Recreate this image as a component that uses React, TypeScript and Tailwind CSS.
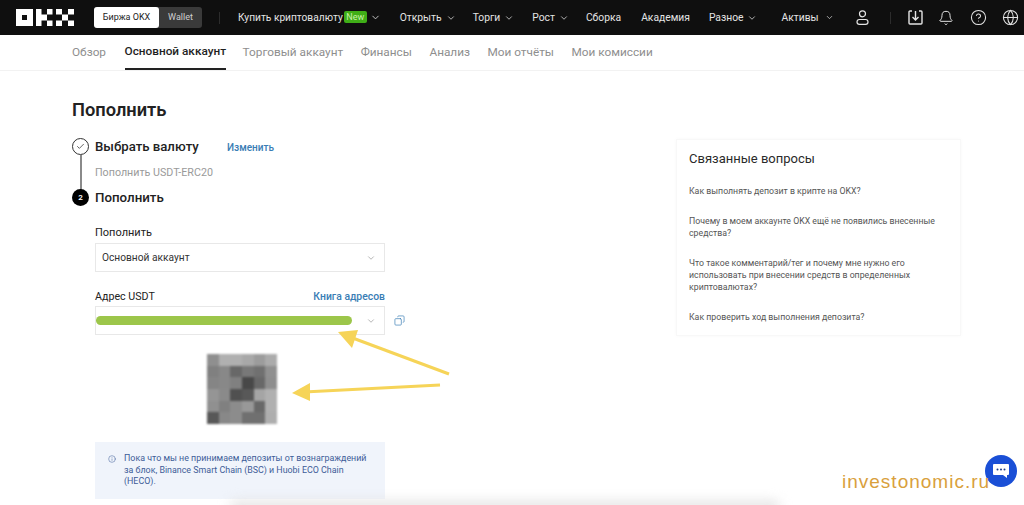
import { ChevronDown, Check, Copy, Info, Bell, CircleHelp, Globe } from "lucide-react";

const font = { fontFamily: "Roboto" };

const qrCells = [
  "#8f8f8f", "#b0b0b0", "#b0b0b0", "#a8a8a8", "#9c9c9c", "#ababab",
  "#808080", "#888888", "#686868", "#787878", "#707070", "#909090",
  "#858585", "#888888", "#808080", "#484848", "#686868", "#8e8e8e",
  "#959595", "#8a8a8a", "#505050", "#585858", "#a5a5a5", "#b0b0b0",
  "#909090", "#808080", "#8c8c8c", "#989898", "#686868", "#b0b0b0",
  "#585858", "#888888", "#8c8c8c", "#707070", "#707070", "#aeaeae",
];

function Logo() {
  return (
    <svg width="58" height="17" viewBox="0 0 58 17" fill="#fff" className="ml-4 shrink-0">
      <path d="M0 0h17v17H0z M6 6v5h5V6z" fillRule="evenodd" />
      <path d="M20 0h5.500v5.500H20z M20 5.500h5.500v6H20z M20 11.500h5.500V17H20z M25.500 5.500h5.500v6h-5.500z M31 0h5.500v5.500H31z M31 11.500h5.500V17H31z" />
      <path d="M40 0h6v5.500h-6z M52 0h6v5.500h-6z M46 5.500h6v6h-6z M40 11.500h6V17h-6z M52 11.500h6V17h-6z" />
    </svg>
  );
}

function UserIcon() {
  return (
    <svg width="13" height="15" viewBox="0 0 13 15" fill="none" stroke="#e4e4e4" strokeWidth="1.200" className="ml-[22px] shrink-0">
      <circle cx="6.500" cy="3.800" r="3" />
      <rect x="1" y="9.500" width="11" height="4.800" rx="2.400" />
    </svg>
  );
}

function DownloadIcon() {
  return (
    <svg width="15" height="15" viewBox="0 0 15 15" fill="none" stroke="#e4e4e4" strokeWidth="1.400" className="ml-[17px] shrink-0">
      <path d="M4 1H2a1 1 0 0 0-1 1v11a1 1 0 0 0 1 1h11a1 1 0 0 0 1-1V2a1 1 0 0 0-1-1h-2" />
      <path d="M7.500 1v8M4.500 7l3 3 3-3" />
    </svg>
  );
}

function NavItem({ label, chevron = true, className = "" }: { label: string; chevron?: boolean; className?: string }) {
  return (
    <div className={`flex shrink-0 items-center whitespace-nowrap text-[10.300px] text-[#e4e4e4] ${className}`}>
      {label}
      {chevron && <ChevronDown size={10} strokeWidth={2} className="ml-[4px] text-[#cfcfcf]" />}
    </div>
  );
}

function Header() {
  return (
    <header className="flex h-[35px] items-center bg-[#0f0f0f]">
      <Logo />
      <div className="ml-[20px] flex h-[21px] w-[108px] shrink-0 rounded-[3px] bg-[#3a3a3a] text-[9px]">
        <div className="flex w-[65px] items-center justify-center whitespace-nowrap rounded-[3px] bg-white text-[#222]">Биржа OKX</div>
        <div className="flex flex-1 items-center justify-center text-[#d0d0d0]">Wallet</div>
      </div>
      <div className="ml-[17px] h-[12px] w-px shrink-0 bg-[#2c2c2c]" />
      <div className="ml-[18px] flex shrink-0 items-center whitespace-nowrap text-[10.200px] text-[#e4e4e4]">
        Купить криптовалюту
        <span className="ml-[1px] flex h-[12px] w-[23px] items-center justify-center rounded-[2px] bg-[#3fae17] text-[9px] text-[#c9f0a8]">New</span>
        <ChevronDown size={11} strokeWidth={2} className="ml-[3px] text-[#cfcfcf]" />
      </div>
      <NavItem label="Открыть" className="ml-[19px]" />
      <NavItem label="Торги" className="ml-[17px]" />
      <NavItem label="Рост" className="ml-[18px]" />
      <NavItem label="Сборка" chevron={false} className="ml-[17px]" />
      <NavItem label="Академия" chevron={false} className="ml-[20px]" />
      <NavItem label="Разное" className="ml-[19px]" />
      <NavItem label="Активы" chevron={false} className="ml-[24px]" />
      <ChevronDown size={9} strokeWidth={2} className="ml-[6px] shrink-0 text-[#cfcfcf]" />
      <UserIcon />
      <div className="ml-[21px] h-[12px] w-px shrink-0 bg-[#2c2c2c]" />
      <DownloadIcon />
      <Bell size={16} strokeWidth={1.500} className="ml-[15px] shrink-0 text-[#e4e4e4]" />
      <CircleHelp size={17} strokeWidth={1.500} className="ml-[16px] shrink-0 text-[#e4e4e4]" />
      <Globe size={17} strokeWidth={1.500} className="ml-[15px] shrink-0 text-[#e4e4e4]" />
    </header>
  );
}

function SubNav() {
  const tabs = ["Торговый аккаунт", "Финансы", "Анализ", "Мои отчёты", "Мои комиссии"];
  return (
    <nav className="flex h-[36px] items-stretch gap-[17.500px] border-b border-[#f2f2f2] pl-[72px] text-[11.800px] text-[#8e8e8e]">
      <div className="flex items-center">Обзор</div>
      <div className="-mr-[1px] ml-[1px] flex items-center border-b-2 border-[#222] font-medium text-[#1f1f1f]">Основной аккаунт</div>
      {tabs.map((t) => (
        <div key={t} className="flex items-center">{t}</div>
      ))}
    </nav>
  );
}

function Field({ children }: { children: React.ReactNode }) {
  return (
    <div className="flex h-[29px] w-[290px] items-center justify-between border border-[#e8e8e8] pr-[8px]">
      {children}
      <ChevronDown size={10} strokeWidth={1.500} className="text-[#8a8a8a]" />
    </div>
  );
}

function LeftColumn() {
  return (
    <section className="w-[604px] shrink-0">
      <h1 className="pt-[27px] text-[18.300px] font-semibold leading-[24px] text-[#222]">Пополнить</h1>

      <div className="relative mt-[16px] pl-[23px]">
        <div className="absolute left-[8px] top-[17px] h-[36px] w-[1.500px] bg-[#8a8a8a]" />
        <div className="absolute left-0 top-0 flex h-[17px] w-[17px] items-center justify-center rounded-full border border-[#333] bg-white">
          <Check size={9} strokeWidth={2} className="text-[#333]" />
        </div>
        <div className="flex h-[17px] items-center pt-[1px]">
          <span className="w-[132px] text-[13.200px] font-medium text-[#222]">Выбрать валюту</span>
          <span className="text-[10px] font-medium text-[#3a7db5]">Изменить</span>
        </div>
        <div className="mt-[11px] h-[14px] text-[10.700px] leading-[14px] text-[#9a9a9a]">Пополнить USDT-ERC20</div>
      </div>

      <div className="relative mt-[9px] flex h-[17px] items-center pl-[23px] pt-[1px] text-[13.300px] font-medium text-[#222]">
        <div className="absolute left-0 top-0 flex h-[17px] w-[17px] items-center justify-center rounded-full bg-black text-[8px] font-semibold text-white">2</div>
        Пополнить
      </div>

      <div className="pl-[23px]">
        <div className="mt-[20px] text-[11px] leading-[14px] text-[#222]">Пополнить</div>
        <div className="mt-[3px]">
          <Field><span className="pl-[6px] text-[10.200px] text-[#333]">Основной аккаунт</span></Field>
        </div>

        <div className="mt-[18px] flex w-[290px] items-center justify-between text-[10.700px] leading-[14px]">
          <span className="text-[#222]">Адрес USDT</span>
          <span className="text-[10.400px] font-medium text-[#3a7db5]">Книга адресов</span>
        </div>
        <div className="mt-[2px] flex items-center">
          <Field><div className="h-[9px] w-[256px] rounded-full bg-[#9cc64a]" /></Field>
          <Copy size={11} strokeWidth={1.500} className="ml-[9px] -scale-x-100 text-[#3a7db5]" />
        </div>

        <div className="ml-[112px] mt-[19px] grid h-[70px] w-[70px] grid-cols-6 blur-[0.8px]">
          {qrCells.map((c, i) => (
            <div key={i} style={{ backgroundColor: c }} />
          ))}
        </div>

        <div className="mt-[18px] flex h-[57px] w-[290px] bg-[#f0f4fb] pl-[13px] pt-[11px] text-[8.900px] leading-[11.500px] text-[#3d5c98]">
          <Info size={8} strokeWidth={1.500} className="mt-[2px] shrink-0" />
          <p className="ml-[8px] w-[246px]">Пока что мы не принимаем депозиты от вознаграждений за блок, Binance Smart Chain (BSC) и Huobi ECO Chain (HECO).</p>
        </div>
      </div>
    </section>
  );
}

function RelatedCard() {
  const questions = [
    "Как выполнять депозит в крипте на OKX?",
    "Почему в моем аккаунте OKX ещё не появились внесенные средства?",
    "Что такое комментарий/тег и почему мне нужно его использовать при внесении средств в определенных криптовалютах?",
    "Как проверить ход выполнения депозита?",
  ];
  return (
    <aside className="mt-[68px] h-[197px] w-[285px] shrink-0 border border-[#f8f8f8] px-[12px] pt-[10px] shadow-[0_0_4px_rgba(0,0,0,0.03)]">
      <h2 className="text-[13px] leading-[17px] text-[#2a2a2a]">Связанные вопросы</h2>
      <div className="mt-[18px] flex flex-col gap-[18px] text-[8.750px] leading-[12px] text-[#555]">
        {questions.map((q) => (
          <p key={q}>{q}</p>
        ))}
      </div>
    </aside>
  );
}

function Arrows() {
  return (
    <svg className="absolute left-0 top-0" width="1024" height="505" viewBox="0 0 1024 505" fill="none">
      <path d="M449 374L350 337" stroke="#f6d458" strokeWidth="3" />
      <path d="M338 332L358 330L352 348Z" fill="#f6d458" />
      <path d="M440 385L304 392" stroke="#f6d458" strokeWidth="3" />
      <path d="M292 393L310 383L310 401Z" fill="#f6d458" />
    </svg>
  );
}

export default function App() {
  return (
    <div className="relative h-[505px] w-[1024px] overflow-hidden bg-white" style={font}>
      <Header />
      <SubNav />
      <main className="flex pl-[72px]">
        <LeftColumn />
        <RelatedCard />
      </main>
      <Arrows />
      <div className="absolute bottom-[-6px] left-[230px] h-[10px] w-[550px] rounded-full bg-[#e2e2e2] blur-[6px]" />
      <div className="absolute left-[985px] top-[455px] flex h-[32px] w-[32px] items-center justify-center rounded-full bg-[#1a4fd6]">
        <svg width="18" height="16" viewBox="0 0 18 16">
          <path d="M2 1h14a1 1 0 0 1 1 1v9a1 1 0 0 1-1 1h-1v3l-4-3H2a1 1 0 0 1-1-1V2a1 1 0 0 1 1-1z" fill="#fff" />
          <circle cx="5.500" cy="6.500" r="1" fill="#1a3a8a" />
          <circle cx="9" cy="6.500" r="1" fill="#1a3a8a" />
          <circle cx="12.500" cy="6.500" r="1" fill="#1a3a8a" />
        </svg>
      </div>
      <div className="absolute left-[842px] top-[470px] text-[19px] leading-[24px] tracking-[1px] text-[#d9a03c]" style={{ fontFamily: "Liberation Sans" }}>
        investonomic.ru
      </div>
    </div>
  );
}
